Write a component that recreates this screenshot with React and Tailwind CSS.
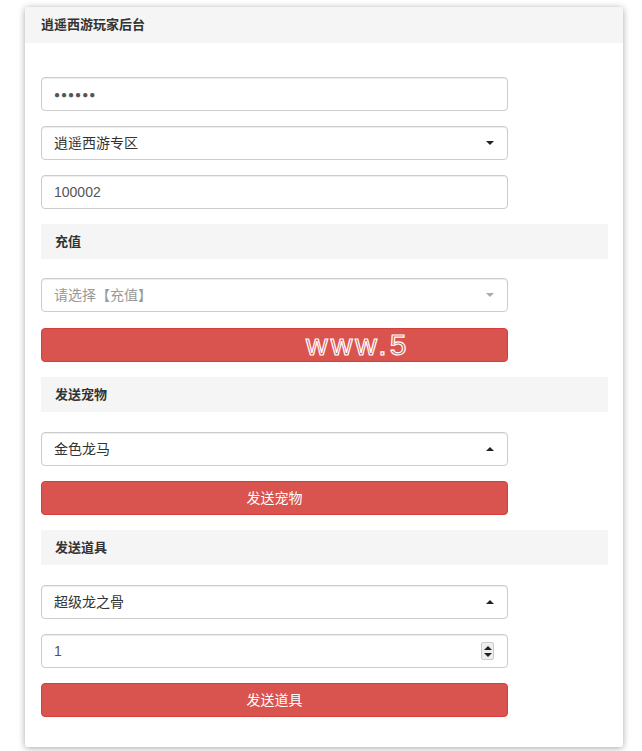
import React from 'react';

const font = { fontFamily: '"Liberation Sans", "Noto Sans CJK SC", sans-serif' };

const Caret = ({ up = false, light = false }) => (
  <span
    className={`block h-0 w-0 border-x-[4px] border-x-transparent ${
      up ? 'border-b-[4px]' : 'border-t-[4px]'
    } ${light ? (up ? 'border-b-[#aaa]' : 'border-t-[#aaa]') : up ? 'border-b-[#222]' : 'border-t-[#222]'}`}
  />
);

const Field = ({ children, className = '' }) => (
  <div
    className={`flex h-[34px] w-[467px] items-center rounded-[4px] border border-[#ccc] bg-white px-[12px] text-[14px] shadow-[inset_0_1px_1px_rgba(0,0,0,0.075)] ${className}`}
  >
    {children}
  </div>
);

const Select = ({ value, placeholder, up }) => (
  <Field className="justify-between">
    <span className={placeholder ? 'text-[#999]' : 'text-[#333]'}>{value}</span>
    <span className="mr-[1px] flex items-center">
      <Caret up={up} light={placeholder} />
    </span>
  </Field>
);

const Section = ({ title }) => (
  <div className="flex h-[35px] w-[567px] items-center bg-[#f5f5f5] px-[14px] text-[13px] font-bold text-[#333]">
    {title}
  </div>
);

const Button = ({ children, className = 'justify-center' }) => (
  <div
    className={`flex h-[34px] w-[467px] items-center rounded-[4px] border border-[#d43f3a] bg-[#d9534f] text-[14px] text-white ${className}`}
  >
    {children}
  </div>
);

export default function App() {
  return (
    <div className="min-h-[751px] bg-white pt-[7px]" style={font}>
      <div className="ml-[25px] w-[598px] rounded-[3px] bg-white shadow-[0_1px_7px_rgba(0,0,0,0.35)]">
        <div className="flex h-[36px] items-center rounded-t-[3px] bg-[#f5f5f5] px-[16px] text-[13px] font-bold text-[#333]">
          逍遥西游玩家后台
        </div>
        <div className="flex flex-col px-[16px] pb-[30px] pt-[34px]">
          <Field className="text-[#555]">
            <span className="text-[10px] tracking-[1px]">●●●●●●</span>
          </Field>
          <div className="mt-[15px]">
            <Select value="逍遥西游专区" />
          </div>
          <div className="mt-[15px]">
            <Field className="text-[#555]">100002</Field>
          </div>

          <div className="mt-[15px]">
            <Section title="充值" />
          </div>
          <div className="mt-[19px]">
            <Select value="请选择【充值】" placeholder />
          </div>
          <div className="mt-[16px]">
            <Button className="justify-start pl-[264px]">
              <span className="whitespace-nowrap text-[30px] leading-[32px] tracking-[3px] text-transparent [-webkit-text-stroke:1.2px_white]">
                www.5
              </span>
            </Button>
          </div>

          <div className="mt-[15px]">
            <Section title="发送宠物" />
          </div>
          <div className="mt-[20px]">
            <Select value="金色龙马" up />
          </div>
          <div className="mt-[15px]">
            <Button>发送宠物</Button>
          </div>

          <div className="mt-[15px]">
            <Section title="发送道具" />
          </div>
          <div className="mt-[20px]">
            <Select value="超级龙之骨" up />
          </div>
          <div className="mt-[15px]">
            <Field className="justify-between text-[#555]">
              <span>1</span>
              <span className="mr-[1px] flex h-[18px] w-[13px] flex-col items-center justify-center gap-[3px] rounded-[2px] border border-[#ccc] bg-[#eee]">
                <Caret up />
                <Caret />
              </span>
            </Field>
          </div>
          <div className="mt-[15px]">
            <Button>发送道具</Button>
          </div>
        </div>
      </div>
    </div>
  );
}
